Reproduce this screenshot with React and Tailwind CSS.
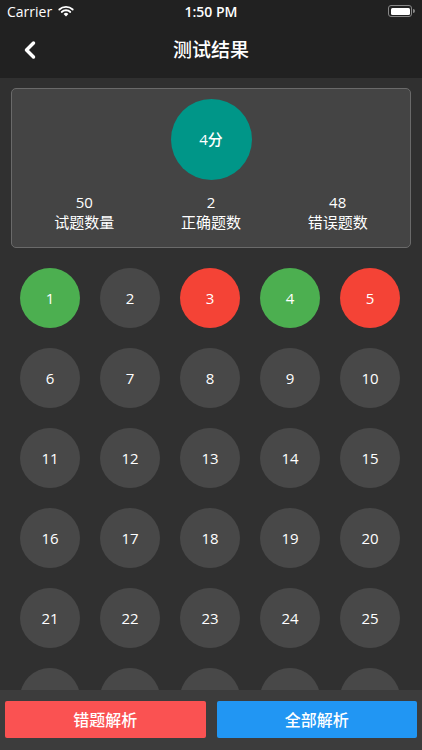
import { ChevronLeft } from "lucide-react";

const correct = [1, 4];
const wrong = [3, 5];

function Dot({ n, hidden }) {
    let color = "bg-[#484848]";
    if (correct.includes(n)) color = "bg-[#4caf50]";
    if (wrong.includes(n)) color = "bg-[#f44336]";
    return (
        <div className={`${color} w-[60px] h-[60px] rounded-full flex items-center justify-center text-white text-[15px] shrink-0`}>
            {hidden ? null : n}
        </div>
    );
}

export default function App() {
    const nums = Array.from({ length: 30 }, (_, i) => i + 1);
    return (
        <div className="w-[422px] h-[750px] bg-[#303030] flex flex-col overflow-hidden text-white" style={{ fontFamily: '"Open Sans", "Noto Sans CJK SC", sans-serif' }}>
            <div className="bg-[#212121] shrink-0">
                <div className="h-[22px] flex items-center justify-between px-[7px] text-[14px]">
                    <div className="flex items-center gap-[6px] w-[100px]">
                        <span>Carrier</span>
                        <svg width="16" height="12" viewBox="0 0 16 12">
                            <path d="M8 11.5 L5.6 8.9 A3.4 3.4 0 0 1 10.4 8.9 Z" fill="white" />
                            <path d="M3.7 7 A6.2 6.2 0 0 1 12.3 7" stroke="white" strokeWidth="1.8" fill="none" strokeLinecap="round" />
                            <path d="M1.3 4.5 A9.6 9.6 0 0 1 14.7 4.5" stroke="white" strokeWidth="1.8" fill="none" strokeLinecap="round" />
                        </svg>
                    </div>
                    <span className="font-semibold">1:50 PM</span>
                    <div className="w-[100px] flex justify-end items-center">
                        <div className="w-[24px] h-[12px] rounded-[3px] border border-[#888] p-[1.5px]">
                            <div className="w-full h-full bg-white rounded-[1.5px]" />
                        </div>
                        <div className="w-[2px] h-[4px] bg-[#888] rounded-r-sm ml-[1px]" />
                    </div>
                </div>
                <div className="h-[56px] flex items-center relative">
                    <ChevronLeft className="absolute left-[16px]" size={28} strokeWidth={3} />
                    <div className="w-full text-center text-[19px] font-medium">测试结果</div>
                </div>
            </div>
            <div className="flex-1 overflow-hidden pt-[10px]">
                <div className="mx-[11px] h-[160px] bg-[#444444] border border-[#6a6a6a] rounded-[5px] flex flex-col items-center pt-[10px]">
                    <div className="w-[81px] h-[81px] rounded-full bg-[#009688] flex items-center justify-center text-[15px] font-medium">4分</div>
                    <div className="w-full grid grid-cols-3 mt-[12px] text-[15px] leading-[20px]">
                        <div className="flex flex-col items-center pl-[12px]"><span>50</span><span>试题数量</span></div>
                        <div className="flex flex-col items-center"><span>2</span><span>正确题数</span></div>
                        <div className="flex flex-col items-center pr-[12px]"><span>48</span><span>错误题数</span></div>
                    </div>
                </div>
                <div className="flex flex-wrap gap-x-5 gap-y-5 w-[400px] ml-[20px] mt-[20px]">
                    {nums.map((n) => <Dot key={n} n={n} hidden={n > 25} />)}
                </div>
            </div>
            <div className="h-[60px] bg-[#3c3c3c] shrink-0 flex gap-[11px] px-[5px] pt-[11px]">
                <button className="flex-1 h-[37px] bg-[#fa5252] rounded-[2px] text-[16px] font-medium">错题解析</button>
                <button className="flex-1 h-[37px] bg-[#2196f3] rounded-[2px] text-[16px] font-medium">全部解析</button>
            </div>
        </div>
    );
}
